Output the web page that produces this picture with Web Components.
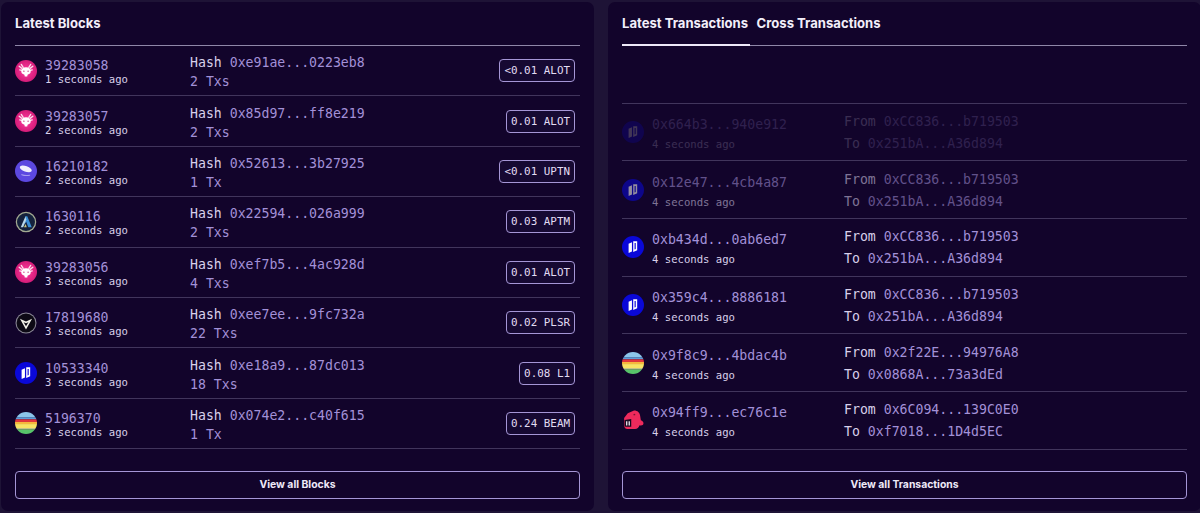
<!DOCTYPE html>
<html>
<head>
<meta charset="utf-8">
<title>Explorer</title>
<style>
  html, body { margin: 0; height: 100%; }
  body { background: #1e1336; overflow: hidden; }
  latest-home { height: 513px; }
</style>
</head>
<body>
<latest-home>
  <list-panel slot="left" style="--btn-top: 21.800px" action="View all Blocks">
    <panel-tab slot="tabs" active label="Latest Blocks" plain></panel-tab>
    <block-row chain="alot" num="39283058" age="1 seconds ago" hash="0xe91ae...0223eb8" txs="2 Txs" fee="&lt;0.01 ALOT"></block-row>
    <block-row chain="alot" num="39283057" age="2 seconds ago" hash="0x85d97...ff8e219" txs="2 Txs" fee="0.01 ALOT"></block-row>
    <block-row chain="uptn" num="16210182" age="2 seconds ago" hash="0x52613...3b27925" txs="1 Tx" fee="&lt;0.01 UPTN"></block-row>
    <block-row chain="aptm" num="1630116" age="2 seconds ago" hash="0x22594...026a999" txs="2 Txs" fee="0.03 APTM"></block-row>
    <block-row chain="alot" num="39283056" age="3 seconds ago" hash="0xef7b5...4ac928d" txs="4 Txs" fee="0.01 ALOT"></block-row>
    <block-row chain="plsr" num="17819680" age="3 seconds ago" hash="0xee7ee...9fc732a" txs="22 Txs" fee="0.02 PLSR"></block-row>
    <block-row chain="l1" num="10533340" age="3 seconds ago" hash="0xe18a9...87dc013" txs="18 Txs" fee="0.08 L1"></block-row>
    <block-row chain="beam" num="5196370" age="3 seconds ago" hash="0x074e2...c40f615" txs="1 Tx" fee="0.24 BEAM"></block-row>
  </list-panel>
  <list-panel slot="right" style="--btn-top: 21.300px" action="View all Transactions">
    <panel-tab slot="tabs" active label="Latest Transactions"></panel-tab>
    <panel-tab slot="tabs" label="Cross Transactions"></panel-tab>
    <tx-row empty></tx-row>
    <tx-row fade=".2" chain="l1" hash="0x664b3...940e912" age="4 seconds ago" from="0xCC836...b719503" to="0x251bA...A36d894"></tx-row>
    <tx-row fade=".55" chain="l1" hash="0x12e47...4cb4a87" age="4 seconds ago" from="0xCC836...b719503" to="0x251bA...A36d894"></tx-row>
    <tx-row chain="l1" hash="0xb434d...0ab6ed7" age="4 seconds ago" from="0xCC836...b719503" to="0x251bA...A36d894"></tx-row>
    <tx-row chain="l1" hash="0x359c4...8886181" age="4 seconds ago" from="0xCC836...b719503" to="0x251bA...A36d894"></tx-row>
    <tx-row chain="beam" hash="0x9f8c9...4bdac4b" age="4 seconds ago" from="0x2f22E...94976A8" to="0x0868A...73a3dEd"></tx-row>
    <tx-row chain="crab" hash="0x94ff9...ec76c1e" age="4 seconds ago" from="0x6C094...139C0E0" to="0xf7018...1D4d5EC"></tx-row>
  </list-panel>
</latest-home>

<script>
const MONO = `"DejaVu Sans Mono", "Liberation Mono", monospace`;
const SANS = `Inter, "Liberation Sans", sans-serif`;

// chain logos, all drawn on a 20x20 box
const chainIcons = {
  alot: `<radialGradient id="g"><stop offset="0" stop-color="#ff3aa0"/><stop offset="1" stop-color="#d41c78"/></radialGradient>
    <circle cx="10" cy="10" r="10.5" fill="url(#g)"/>
    <path d="M3.500 5.500l2.500 2M4 9l2.300.5M5.500 3.700L7.300 6.500M16.500 5.500L14 7.500M16 9l-2.300.5M14.500 3.700L12.700 6.500" stroke="#fbdcea" stroke-width="1.300" stroke-linecap="round" fill="none"/>
    <path d="M10 6.500c3 0 4.500 1.800 4.500 4s-2 2.700-3 3l-.3 1.800H8.800l-.3-1.800c-1-.3-3-.8-3-3s1.500-4 4.500-4z" fill="#fff"/>
    <circle cx="8" cy="10.200" r=".6" fill="#c01a6c"/><circle cx="12" cy="10.200" r=".6" fill="#c01a6c"/>`,
  uptn: `<circle cx="10" cy="10" r="10.500" fill="#5c48e0"/>
    <ellipse cx="9.800" cy="8" rx="6" ry="2.700" transform="rotate(20 9.800 8)" fill="#f1effd"/>
    <path d="M6 13.500c2 .8 5 1 7.500.5" stroke="#a79cf0" stroke-width="1" fill="none" stroke-linecap="round"/>`,
  aptm: `<circle cx="10" cy="10" r="9.800" fill="#a3aa92"/><circle cx="10" cy="10" r="8.600" fill="#14213c"/>
    <path d="M9.200 4.500h2L15.500 15h-3.300l-2-5.200-1.500 2.300z" fill="#3b8fd6"/>
    <path d="M9.400 4.800L5 15h2.300l3-7.400z" fill="#b9d8ea"/>
    <path d="M8 15l1.700-3.200 1 3.200z" fill="#c8c47a"/>`,
  plsr: `<circle cx="10" cy="10" r="10" fill="#8b8896"/><circle cx="10" cy="10" r="9" fill="#0c0914"/>
    <path d="M4.200 6l5.800 2.600L15.800 6 10 16.300z" fill="#f0efe6"/>
    <path d="M7.700 9.200L10 10.300l2.300-1.100L10 13z" fill="#0c0914"/>`,
  l1: `<circle cx="10" cy="10" r="10.500" fill="#0a08d8"/>
    <path d="M5.800 6.800l3.200-1.400v8.800l-3.200 1.500z" fill="#fff"/>
    <path d="M10.200 4.400h3.800v8.700l-3.800 1.600z" fill="#fff"/>
    <path d="M11.500 6.200h1.100v5.800l-1.100.4z" fill="#0a08d8"/>`,
  beam: `<clipPath id="c"><circle cx="10" cy="10" r="10.500"/></clipPath>
    <g clip-path="url(#c)">
      <rect x="-1" y="-1" width="22" height="5.500" fill="#8cc6ea"/>
      <rect x="-1" y="4.500" width="22" height="2" fill="#5f9ed8"/>
      <rect x="-1" y="6.500" width="22" height="2.500" fill="#e5343c"/>
      <rect x="-1" y="9" width="22" height="2" fill="#f5b83d"/>
      <rect x="-1" y="11" width="22" height="4" fill="#f7e463"/>
      <rect x="-1" y="15" width="22" height="1.200" fill="#e8f0a0"/>
      <rect x="-1" y="16.200" width="22" height="5" fill="#58c46a"/>
    </g>`,
  crab: `<path d="M1.500 8L5 3.500 11 1c3.500 0 5.300 2 5.800 5l.7 4.200c1.500.7 2.500 1.600 2.500 2.900 0 1.800-1.700 2.400-3.700 1.900-.8 2.300-2.300 3.500-4.300 3.500H4.500c-1.600 0-2.600-1-2.800-2.500z" fill="#ee2a5c"/>
    <path d="M10.300 4.600l1.600-.5.400 1.200-1.500.5z" fill="#7a1233"/>
    <path d="M2 10l6.300-1v7.500H3.500c-1 0-1.500-.5-1.500-1.500z" fill="#170a20"/>
    <path d="M3.400 11.200h1.200v4H3.400zM5.800 11.200H7v4H5.800z" fill="#f1eef6"/>`
};

class ChainIcon extends HTMLElement {
  connectedCallback() {
    this.attachShadow({ mode: 'open' });
    this.shadowRoot.innerHTML = `
      <style>
        :host { display: block; width: 22px; height: 22px; flex: none; margin-top: -2px; }
        svg { display: block; width: 22px; height: 22px; overflow: visible; }
      </style>
      <svg viewBox="-0.500 -0.500 21 21">${chainIcons[this.getAttribute('name')] || ''}</svg>`;
  }
}

const rowCss = `
  .num { color: #a391d8; font: 13.200px/17px ${MONO}; }
  .age { color: #d8d0ea; font: 10.600px/14px ${MONO}; }
  .lbl { color: #d8d0ea; }
  .val { color: #a391d8; }
  .line { font: 13.200px/18px ${MONO}; white-space: nowrap; }
`;

class BlockRow extends HTMLElement {
  connectedCallback() {
    const a = n => this.getAttribute(n);
    this.attachShadow({ mode: 'open' });
    this.shadowRoot.innerHTML = `
      <style>
        ${rowCss}
        :host { display: grid; grid-template-columns: 30px 145px 1fr auto; align-items: center;
                height: 50.400px; box-sizing: border-box; padding-top: 2px;
                border-bottom: 1px solid #41355c; }
        .age { margin-top: -2px; }
        .hash { margin-top: 2px; }
        .badge { border: 1px solid #a596d6; border-radius: 4px; color: #e2dcf2; background: #160932;
                 font: 10.900px/21px ${MONO}; padding: 0 4px; margin: -2px 5px 0 0; }
        .tight { margin-top: 1px; }
      </style>
      <chain-icon name="${a('chain')}"></chain-icon>
      <div><div class="num">${a('num')}</div><div class="age">${a('age')}</div></div>
      <div class="hash">
        <div class="line"><span class="lbl">Hash</span> <span class="val">${a('hash')}</span></div>
        <div class="line val tight">${a('txs')}</div>
      </div>
      <span class="badge">${a('fee').replace('<', '&lt;')}</span>`;
  }
}

class TxRow extends HTMLElement {
  connectedCallback() {
    const a = n => this.getAttribute(n);
    this.attachShadow({ mode: 'open' });
    const css = `
      ${rowCss}
      :host { display: grid; grid-template-columns: 30px 192px 1fr; align-items: center;
              height: 57.700px; box-sizing: border-box; padding-top: 2px;
              border-bottom: 1px solid #41355c; }
      .stack { margin-top: 1px; }
      .age { margin-top: 4px; }
      .line + .line { margin-top: 4px; }
      .f { opacity: ${a('fade') || 1}; }
    `;
    if (this.hasAttribute('empty')) {
      this.shadowRoot.innerHTML = `<style>${css}</style>`;
      return;
    }
    this.shadowRoot.innerHTML = `
      <style>${css}</style>
      <chain-icon class="f" name="${a('chain')}"></chain-icon>
      <div class="f stack"><div class="num">${a('hash')}</div><div class="age">${a('age')}</div></div>
      <div class="f">
        <div class="line"><span class="lbl">From</span> <span class="val">${a('from')}</span></div>
        <div class="line"><span class="lbl">To</span> <span class="val">${a('to')}</span></div>
      </div>`;
  }
}

class PanelTab extends HTMLElement {
  connectedCallback() {
    this.attachShadow({ mode: 'open' });
    const on = this.hasAttribute('active') && !this.hasAttribute('plain');
    this.shadowRoot.innerHTML = `
      <style>
        :host { display: block; height: 44px; box-sizing: border-box; padding: 13px 1.500px 0 0;
                color: #f3effa; font: 700 13.100px/17px ${SANS}; white-space: nowrap;
                border-bottom: 2px solid ${on ? '#eee9f8' : 'transparent'}; }
      </style>
      ${this.getAttribute('label')}`;
  }
}

class ListPanel extends HTMLElement {
  connectedCallback() {
    this.attachShadow({ mode: 'open' });
    this.shadowRoot.innerHTML = `
      <style>
        :host { display: flex; flex-direction: column; background: #12042b; border-radius: 7px;
                padding: 0 14px; min-width: 0; }
        .tabs { display: flex; gap: 7px; height: 44px; box-sizing: border-box;
                box-shadow: inset 0 -1px 0 #8f87a8; }
        .btn { margin-top: var(--btn-top); height: 28.200px; box-sizing: border-box; border: 1px solid #a596d6;
               border-radius: 4px; display: flex; align-items: center; justify-content: center;
               color: #eee9f8; font: 700 10.400px/1 ${SANS}; }
      </style>
      <div class="tabs"><slot name="tabs"></slot></div>
      <slot></slot>
      <div class="btn">${this.getAttribute('action')}</div>`;
  }
}

class LatestHome extends HTMLElement {
  connectedCallback() {
    this.attachShadow({ mode: 'open' });
    this.shadowRoot.innerHTML = `
      <style>
        :host { display: grid; grid-template-columns: 593px 593px; column-gap: 14px;
                padding: 2px 0 2px 1px; box-sizing: border-box; }
      </style>
      <slot name="left"></slot>
      <slot name="right"></slot>`;
  }
}

customElements.define('chain-icon', ChainIcon);
customElements.define('block-row', BlockRow);
customElements.define('tx-row', TxRow);
customElements.define('panel-tab', PanelTab);
customElements.define('list-panel', ListPanel);
customElements.define('latest-home', LatestHome);
</script>
</body>
</html>
